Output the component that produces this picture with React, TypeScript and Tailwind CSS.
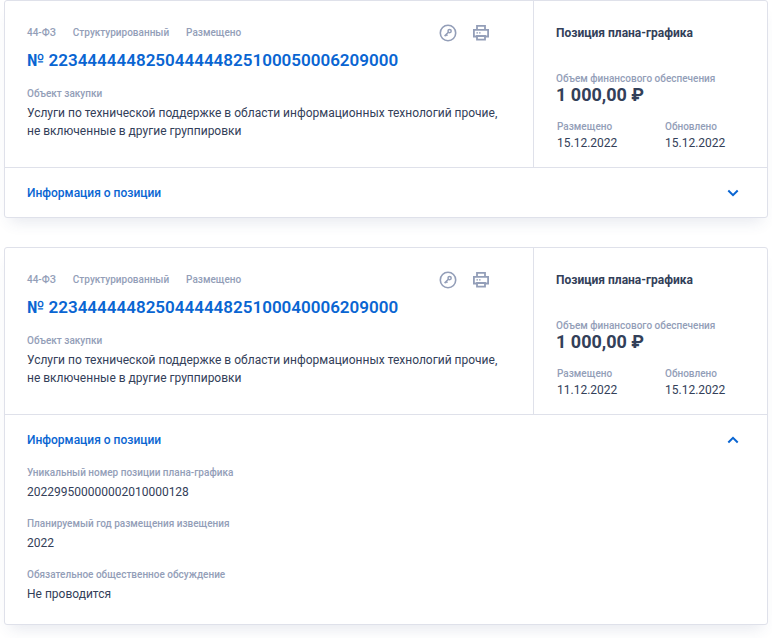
import React, { useState } from 'react';
import { clsx } from 'clsx';

type Detail = { label: string; value: string };

type Position = {
  number: string;
  placed: string;
  updated: string;
  open: boolean;
};

const positions: Position[] = [
  { number: '223444444825044444825100050006209000', placed: '15.12.2022', updated: '15.12.2022', open: false },
  { number: '223444444825044444825100040006209000', placed: '11.12.2022', updated: '15.12.2022', open: true },
];

const details: Detail[] = [
  { label: 'Уникальный номер позиции плана-графика', value: '202299500000002010000128' },
  { label: 'Планируемый год размещения извещения', value: '2022' },
  { label: 'Обязательное общественное обсуждение', value: 'Не проводится' },
];

function KeyIcon() {
  return (
    <svg width="18" height="18" viewBox="0 0 18 18" fill="none" stroke="currentColor">
      <circle cx="9" cy="9" r="7.7" strokeWidth="1.6" />
      <circle cx="10.6" cy="7.1" r="1.6" strokeWidth="1.5" />
      <path d="M9.4 8.3L5.6 12.1M7.2 10.5L8.4 11.7" strokeWidth="1.6" />
    </svg>
  );
}

function PrintIcon() {
  return (
    <svg width="18" height="18" viewBox="0 0 18 18" fill="none" stroke="currentColor" strokeWidth="1.8">
      <path d="M5 5.6V1.9H13V5.6" />
      <path d="M5 12.5H1.9V5.8H16.1V12.5H13" />
      <path d="M5 12H13V15.6H5Z" />
      <path d="M4.4 8.8H6M7 8.8H8.6" strokeWidth="1.3" />
    </svg>
  );
}

function Label({ children }: { children: React.ReactNode }) {
  return <div className="text-[10px] leading-3 font-medium text-[#939eb8]">{children}</div>;
}

function PositionCard({ item }: { item: Position }) {
  const [open, setOpen] = useState(item.open);

  return (
    <article className="rounded-[3px] border border-[#dfe1ea] bg-white shadow-[0_10px_14px_-6px_rgba(60,70,120,0.12)]">
      <div className="flex border-b border-[#dfe1ea]">
        {/* Main info */}
        <div className="flex-1 px-[22px] pt-6 pb-[27px]">
          <div className="flex h-4 items-center gap-[17px]">
            <Label>44-ФЗ</Label>
            <Label>Структурированный</Label>
            <Label>Размещено</Label>
            <div className="ml-auto flex gap-[15px] pr-[21px] text-[#939eb8]">
              <button type="button" aria-label="Электронная подпись"><KeyIcon /></button>
              <button type="button" aria-label="Печать"><PrintIcon /></button>
            </div>
          </div>
          <a href="#" className="mt-[7px] block text-[17px] leading-6 font-semibold text-[#0965d2]">
            № {item.number}
          </a>
          <div className="mt-4">
            <Label>Объект закупки</Label>
            <p className="mt-1 text-xs leading-[18px]">
              Услуги по технической поддержке в области информационных технологий прочие, не включенные в другие группировки
            </p>
          </div>
        </div>

        {/* Price and dates */}
        <div className="w-[234px] shrink-0 border-l border-[#dfe1ea] px-[22px] pt-6">
          <h3 className="text-xs leading-4 font-bold">Позиция плана-графика</h3>
          <div className="mt-8">
            <Label>Объем финансового обеспечения</Label>
            <div className="text-[18px] leading-5 font-bold">1 000,00 ₽</div>
          </div>
          <div className="mt-4 grid grid-cols-[108px_1fr] pl-px text-xs leading-4">
            <div>
              <Label>Размещено</Label>
              <div className="mt-0.5">{item.placed}</div>
            </div>
            <div>
              <Label>Обновлено</Label>
              <div className="mt-0.5">{item.updated}</div>
            </div>
          </div>
        </div>
      </div>

      {/* Collapsible details */}
      <button
        type="button"
        aria-expanded={open}
        onClick={() => setOpen(!open)}
        className="flex h-[49px] w-full items-center justify-between pr-7 pl-[22px] text-xs font-medium text-[#0965d2]"
      >
        Информация о позиции
        <svg
          width="12"
          height="8"
          viewBox="0 0 12 8"
          fill="none"
          stroke="currentColor"
          strokeWidth="2"
          className={clsx(open && 'rotate-180')}
        >
          <path d="M1.3 1.5L6 6.2L10.7 1.5" />
        </svg>
      </button>
      {open && (
        <div className="flex flex-col gap-[17px] px-[22px] pt-[3px] pb-[21px]">
          {details.map((d) => (
            <div key={d.label}>
              <Label>{d.label}</Label>
              <div className="mt-1 text-xs leading-[18px]">{d.value}</div>
            </div>
          ))}
        </div>
      )}
    </article>
  );
}

export default function App() {
  return (
    <main className="flex min-h-screen flex-col gap-[29px] bg-white px-1 font-[Roboto,sans-serif] text-[#334059]">
      {positions.map((item) => (
        <PositionCard key={item.number} item={item} />
      ))}
    </main>
  );
}
